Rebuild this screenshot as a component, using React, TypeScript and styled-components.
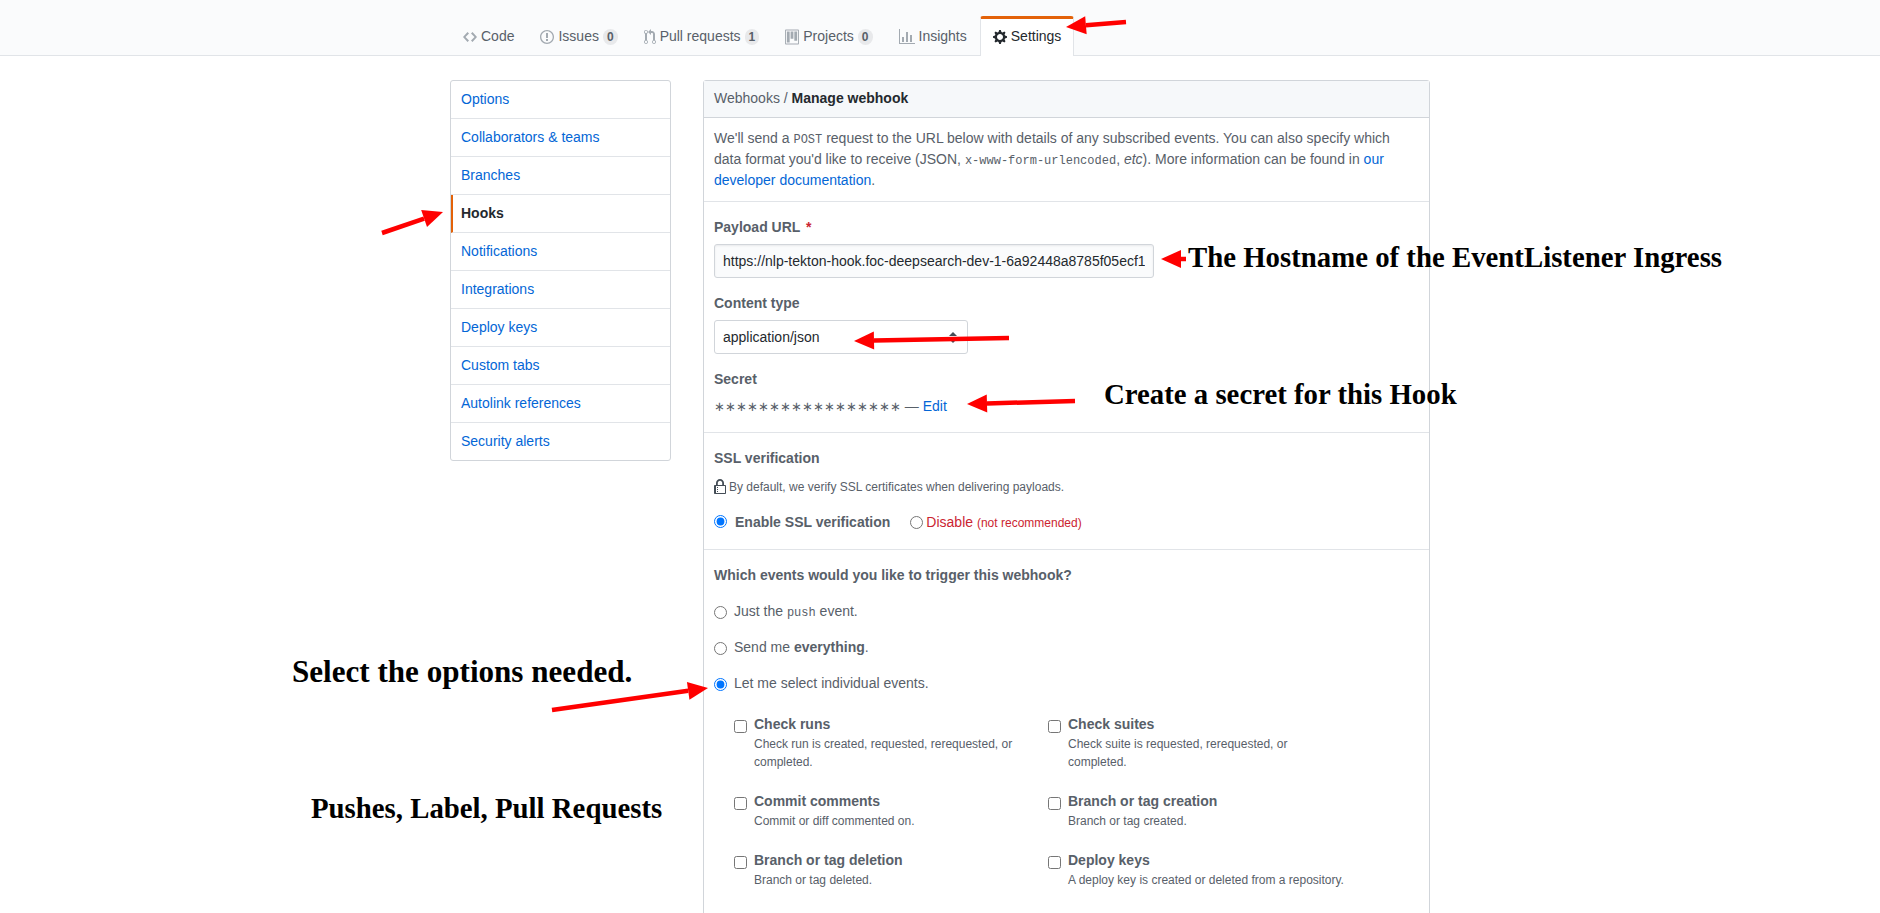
import styled, { createGlobalStyle } from "styled-components";

const GlobalStyle = createGlobalStyle`
    html, body {
        margin: 0;
        height: 913px;
        overflow: hidden;
        background: #fff;
    }
    body {
        font-family: "Liberation Sans", Arial, sans-serif;
        font-size: 14px;
        line-height: 1.5;
        color: #24292e;
    }
`

const Page = styled.div`
    position: relative;
    width: 1880px;
    height: 913px;
    overflow: hidden;
`

const RepoHead = styled.header`
    height: 55px;
    background: #fafbfc;
    border-bottom: 1px solid #e1e4e8;
`

const Nav = styled.nav`
    display: flex;
    width: 980px;
    height: 56px;
    margin: 0 auto;
    padding-top: 16px;
    box-sizing: border-box;
`

const Tab = styled.a<{ $selected?: boolean }>`
    display: flex;
    align-items: center;
    gap: 4px;
    box-sizing: border-box;
    height: 40px;
    padding: 0 12px 2px;
    color: ${(p) => (p.$selected ? "#24292e" : "#586069")};
    background: ${(p) => (p.$selected ? "#fff" : "transparent")};
    border: 1px solid ${(p) => (p.$selected ? "#e1e4e8" : "transparent")};
    border-bottom: 0;
    border-top: 3px solid ${(p) => (p.$selected ? "#e36209" : "transparent")};
    border-radius: 3px 3px 0 0;
    svg {
        fill: ${(p) => (p.$selected ? "#24292e" : "#a3aab1")};
    }
`

const Counter = styled.span`
    padding: 2px 4px;
    font-size: 12px;
    font-weight: 600;
    line-height: 1;
    color: #586069;
    background: rgba(27, 31, 35, 0.08);
    border-radius: 20px;
`

const Container = styled.main`
    display: grid;
    grid-template-columns: 221px 727px;
    gap: 32px;
    width: 980px;
    margin: 24px auto 0;
`

const Menu = styled.ul`
    align-self: start;
    margin: 0;
    padding: 0;
    list-style: none;
    background: #fff;
    border: 1px solid #d1d5da;
    border-radius: 3px;
`

const MenuItem = styled.li<{ $selected?: boolean }>`
    box-sizing: border-box;
    height: 38px;
    padding: 8px 10px 0 ${(p) => (p.$selected ? "8px" : "10px")};
    color: ${(p) => (p.$selected ? "#24292e" : "#0366d6")};
    font-weight: ${(p) => (p.$selected ? 600 : 400)};
    border-left: ${(p) => (p.$selected ? "2px solid #e36209" : "0")};
    border-bottom: 1px solid #e1e4e8;
    &:last-child {
        height: 37px;
        border-bottom: 0;
    }
`

const Panel = styled.section`
    min-height: 900px;
    background: #fff;
    border: 1px solid #d1d5da;
    border-radius: 3px;
    color: #586069;
`

const PanelHead = styled.div`
    box-sizing: border-box;
    height: 37px;
    padding: 7px 10px;
    background: #f6f8fa;
    border-bottom: 1px solid #d1d5da;
    strong {
        color: #24292e;
        font-weight: 600;
    }
`

const Section = styled.div<{ $bottom?: number; $line?: boolean }>`
    padding: 15px 10px ${(p) => p.$bottom ?? 15}px;
    border-bottom: ${(p) => (p.$line ? "1px solid #e1e4e8" : "0")};
`

const Intro = styled.p`
    margin: 0;
    padding: 10px 10px;
    border-bottom: 1px solid #e1e4e8;
    code {
        font-family: "Liberation Mono", monospace;
        font-size: 12px;
    }
    a {
        color: #0366d6;
    }
`

const Field = styled.div`
    & + & {
        margin-top: 15px;
    }
`

const FieldLabel = styled.div`
    font-weight: 600;
    margin-bottom: 6px;
    em {
        color: #cb2431;
        font-style: normal;
        margin-left: 2px;
    }
`

const TextInput = styled.input`
    display: block;
    box-sizing: border-box;
    width: 440px;
    height: 34px;
    padding: 6px 8px;
    font: 14px "Liberation Sans", Arial, sans-serif;
    color: #24292e;
    background: #fafbfc;
    border: 1px solid #d1d5da;
    border-radius: 3px;
    box-shadow: inset 0 1px 2px rgba(27, 31, 35, 0.075);
    outline: none;
`

const SelectWrap = styled.div`
    position: relative;
    width: 254px;
    &::before,
    &::after {
        content: "";
        position: absolute;
        right: 11px;
        border-left: 4px solid transparent;
        border-right: 4px solid transparent;
    }
    &::before {
        top: 12px;
        border-bottom: 4px solid #444d56;
    }
    &::after {
        top: 19px;
        border-top: 4px solid #444d56;
    }
`

const Select = styled.select`
    display: block;
    appearance: none;
    box-sizing: border-box;
    width: 100%;
    height: 34px;
    padding: 0 8px;
    font: 14px "Liberation Sans", Arial, sans-serif;
    color: #24292e;
    background: #fff;
    border: 1px solid #d1d5da;
    border-radius: 3px;
`

const SecretRow = styled.div`
    a {
        color: #0366d6;
    }
`

const Stars = styled.span`
    font-family: "DejaVu Sans", sans-serif;
    font-size: 13px;
    letter-spacing: 0.1px;
    color: #586069;
`

const HelpText = styled.div`
    display: flex;
    align-items: center;
    gap: 3px;
    height: 18px;
    font-size: 12px;
    line-height: 18px;
    margin: 9px 0 16px;
    svg {
        fill: #444d56;
        flex: none;
    }
`

const RadioLine = styled.div`
    display: flex;
    align-items: center;
    height: 21px;
`

const Radio = styled.input`
    flex: none;
    width: 13px;
    height: 13px;
    margin: 0 7px 0 0;
`

const EnableRadio = styled(Radio)`
    margin: -2px 8px 0 0;
`

const EventRadio = styled(Radio)`
    margin-top: 2px;
`

const RadioLabel = styled.span<{ $strong?: boolean }>`
    font-weight: ${(p) => (p.$strong ? 600 : 400)};
`

const Danger = styled.span`
    color: #cb2431;
    small {
        font-size: 12px;
    }
`

const SslOff = styled.span`
    display: flex;
    align-items: center;
    margin-left: 20px;
    input {
        margin-right: 3px;
    }
`

const EventChoices = styled.div`
    display: grid;
    gap: 15px;
    margin-top: 15px;
    code {
        font-family: "Liberation Mono", monospace;
        font-size: 12px;
    }
    strong {
        font-weight: 600;
    }
`

const EventGrid = styled.div`
    display: grid;
    grid-template-columns: 314px 314px;
    row-gap: 20px;
    margin: 20px 0 0 20px;
`

const EventItem = styled.div`
    display: grid;
    grid-template-columns: 20px 278px;
`

const Check = styled.input`
    width: 13px;
    height: 13px;
    margin: 6px 0 0;
`

const EventName = styled.div`
    font-weight: 600;
`

const EventNote = styled.div`
    grid-column: 2;
    font-size: 12px;
    line-height: 18px;
`

const Note = styled.div<{ $x: number; $y: number; $size?: number }>`
    position: absolute;
    left: ${(p) => p.$x}px;
    top: ${(p) => p.$y}px;
    font-family: "Liberation Serif", "Times New Roman", serif;
    font-size: ${(p) => p.$size ?? 28.8}px;
    font-weight: 700;
    line-height: 40px;
    color: #000;
    white-space: nowrap;
`

const ArrowLayer = styled.svg`
    position: absolute;
    left: 0;
    top: 0;
    pointer-events: none;
`

const Icon = ({ w, shown, d }: { w: number; shown?: number; d: string }) => (
    <svg width={shown ?? w} height={16} viewBox={`0 0 ${w} 16`}>
        <path fillRule="evenodd" d={d} />
    </svg>
)

const icons = {
    code: "M9.5 3L8 4.5 11.5 8 8 11.5 9.5 13 14 8 9.5 3zm-5 0L0 8l4.5 5L6 11.5 2.5 8 6 4.5 4.5 3z",
    issue: "M7 2.3c3.14 0 5.7 2.56 5.7 5.7s-2.56 5.7-5.7 5.7A5.71 5.71 0 0 1 1.3 8c0-3.14 2.56-5.7 5.7-5.7zM7 1C3.14 1 0 4.14 0 8s3.14 7 7 7 7-3.14 7-7-3.14-7-7-7zm1 3H6v5h2V4zm0 6H6v2h2v-2z",
    pull: "M11 11.28V5c-.03-.78-.34-1.47-.94-2.06C9.46 2.35 8.78 2.03 8 2H7V0L4 3l3 3V4h1c.27.02.48.11.69.31.21.2.3.42.31.69v6.28A1.993 1.993 0 0 0 10 15a1.993 1.993 0 0 0 1-3.72zm-1 2.92c-.66 0-1.2-.55-1.2-1.2 0-.65.55-1.2 1.2-1.2.65 0 1.2.55 1.2 1.2 0 .65-.55 1.2-1.2 1.2zM4 3c0-1.11-.89-2-2-2a1.993 1.993 0 0 0-1 3.72v6.56A1.993 1.993 0 0 0 2 15a1.993 1.993 0 0 0 1-3.72V4.72c.59-.34 1-.98 1-1.72zm-.8 10c0 .66-.55 1.2-1.2 1.2-.65 0-1.2-.55-1.2-1.2 0-.65.55-1.2 1.2-1.2.65 0 1.2.55 1.2 1.2zM2 4.2C1.34 4.2.8 3.65.8 3c0-.65.55-1.2 1.2-1.2.65 0 1.2.55 1.2 1.2 0 .65-.55 1.2-1.2 1.2z",
    project: "M10 12h3V2h-3v10zm-4-2h3V2H6v8zm-4 4h3V2H2v12zm-1 1h13V1H1v14zM14 0H1a1 1 0 0 0-1 1v14a1 1 0 0 0 1 1h13a1 1 0 0 0 1-1V1a1 1 0 0 0-1-1z",
    graph: "M16 14v1H0V0h1v14h15zM5 13H3V8h2v5zm4 0H7V3h2v10zm4 0h-2V6h2v7z",
    gear: "M14 8.77v-1.6l-1.94-.64-.45-1.09.88-1.84-1.13-1.13-1.81.91-1.09-.45-.69-1.92h-1.6l-.63 1.94-1.11.45-1.84-.88-1.13 1.13.91 1.81-.45 1.09L0 7.23v1.59l1.94.64.45 1.09-.88 1.84 1.13 1.13 1.81-.91 1.09.45.69 1.92h1.59l.63-1.94 1.11-.45 1.84.88 1.13-1.13-.92-1.81.47-1.09L14 8.75v.02zM7 11c-1.66 0-3-1.34-3-3s1.34-3 3-3 3 1.34 3 3-1.34 3-3 3z",
    lock: "M4 13H3v-1h1v1zm8-6v7c0 .55-.45 1-1 1H1c-.55 0-1-.45-1-1V7c0-.55.45-1 1-1h1V4c0-2.2 1.8-4 4-4s4 1.8 4 4v2h1c.55 0 1 .45 1 1zM3.8 6h4.41V4c0-1.22-.98-2.2-2.2-2.2-1.22 0-2.2.98-2.2 2.2v2H3.8zM11 7H2v7h9V7zM4 8H3v1h1V8zm0 2H3v1h1v-1z",
}

const menu = [
    "Options",
    "Collaborators & teams",
    "Branches",
    "Hooks",
    "Notifications",
    "Integrations",
    "Deploy keys",
    "Custom tabs",
    "Autolink references",
    "Security alerts",
]

const events = [
    { name: "Check runs", note: "Check run is created, requested, rerequested, or completed." },
    { name: "Check suites", note: "Check suite is requested, rerequested, or completed." },
    { name: "Commit comments", note: "Commit or diff commented on." },
    { name: "Branch or tag creation", note: "Branch or tag created." },
    { name: "Branch or tag deletion", note: "Branch or tag deleted." },
    { name: "Deploy keys", note: "A deploy key is created or deleted from a repository." },
]

// tail x, tail y, tip x, tip y
const arrows = [
    [1126, 22, 1066, 27],
    [382, 233, 443, 212],
    [1186, 259, 1161, 259],
    [1009, 338, 854, 341],
    [1075, 401, 967, 404],
    [552, 710, 708, 688],
]

const Arrow = ({ a }: { a: number[] }) => {
    const [x1, y1, x2, y2] = a
    const len = Math.hypot(x2 - x1, y2 - y1)
    const ux = (x2 - x1) / len
    const uy = (y2 - y1) / len
    const head = 20
    const half = 9
    const bx = x2 - ux * head
    const by = y2 - uy * head
    const points = `${x2},${y2} ${bx - uy * half},${by + ux * half} ${bx + uy * half},${by - ux * half}`
    return (
        <g fill="#ff0000" stroke="#ff0000">
            <line x1={x1} y1={y1} x2={bx} y2={by} strokeWidth={4.5} />
            <polygon points={points} strokeWidth={0} />
        </g>
    )
}

export default function App() {
    return (
        <Page>
            <GlobalStyle />
            <RepoHead>
                <Nav>
                    <Tab><Icon w={14} d={icons.code} />Code</Tab>
                    <Tab><Icon w={14} d={icons.issue} />Issues <Counter>0</Counter></Tab>
                    <Tab><Icon w={12} d={icons.pull} />Pull requests <Counter>1</Counter></Tab>
                    <Tab><Icon w={15} shown={14} d={icons.project} />Projects <Counter>0</Counter></Tab>
                    <Tab><Icon w={16} d={icons.graph} />Insights</Tab>
                    <Tab $selected><Icon w={14} d={icons.gear} />Settings</Tab>
                </Nav>
            </RepoHead>
            <Container>
                <Menu>
                    {menu.map((item) => (
                        <MenuItem key={item} $selected={item === "Hooks"}>{item}</MenuItem>
                    ))}
                </Menu>
                <Panel>
                    <PanelHead>Webhooks / <strong>Manage webhook</strong></PanelHead>
                    <Intro>
                        We'll send a <code>POST</code> request to the URL below with details of any subscribed events. You can also specify which data format you'd like to receive (JSON, <code>x-www-form-urlencoded</code>, <em>etc</em>). More information can be found in <a>our developer documentation</a>.
                    </Intro>
                    <Section $line>
                        <Field>
                            <FieldLabel>Payload URL <em>*</em></FieldLabel>
                            <TextInput readOnly value="https://nlp-tekton-hook.foc-deepsearch-dev-1-6a92448a8785f05ecf1.us-south.containers" />
                        </Field>
                        <Field>
                            <FieldLabel>Content type</FieldLabel>
                            <SelectWrap>
                                <Select defaultValue="json">
                                    <option value="json">application/json</option>
                                </Select>
                            </SelectWrap>
                        </Field>
                        <Field>
                            <FieldLabel>Secret</FieldLabel>
                            <SecretRow><Stars>∗∗∗∗∗∗∗∗∗∗∗∗∗∗∗∗∗</Stars> — <a>Edit</a></SecretRow>
                        </Field>
                    </Section>
                    <Section $line $bottom={16}>
                        <FieldLabel>SSL verification</FieldLabel>
                        <HelpText>
                            <Icon w={12} d={icons.lock} />
                            By default, we verify SSL certificates when delivering payloads.
                        </HelpText>
                        <RadioLine>
                            <EnableRadio type="radio" name="ssl" defaultChecked />
                            <RadioLabel $strong>Enable SSL verification</RadioLabel>
                            <SslOff>
                                <Radio type="radio" name="ssl" />
                                <Danger>Disable <small>(not recommended)</small></Danger>
                            </SslOff>
                        </RadioLine>
                    </Section>
                    <Section>
                        <FieldLabel>Which events would you like to trigger this webhook?</FieldLabel>
                        <EventChoices>
                            <RadioLine>
                                <EventRadio type="radio" name="scope" />
                                <span>Just the <code>push</code> event.</span>
                            </RadioLine>
                            <RadioLine>
                                <EventRadio type="radio" name="scope" />
                                <span>Send me <strong>everything</strong>.</span>
                            </RadioLine>
                            <RadioLine>
                                <EventRadio type="radio" name="scope" defaultChecked />
                                <span>Let me select individual events.</span>
                            </RadioLine>
                        </EventChoices>
                        <EventGrid>
                            {events.map((ev) => (
                                <EventItem key={ev.name}>
                                    <Check type="checkbox" />
                                    <EventName>{ev.name}</EventName>
                                    <EventNote>{ev.note}</EventNote>
                                </EventItem>
                            ))}
                        </EventGrid>
                    </Section>
                </Panel>
            </Container>
            <ArrowLayer width={1880} height={913}>
                {arrows.map((a) => (
                    <Arrow key={a.join()} a={a} />
                ))}
            </ArrowLayer>
            <Note $x={1188} $y={237}>The Hostname of the EventListener Ingress</Note>
            <Note $x={1104} $y={374}>Create a secret for this Hook</Note>
            <Note $x={292} $y={652} $size={31.1}>Select the options needed.</Note>
            <Note $x={311} $y={788}>Pushes, Label, Pull Requests</Note>
        </Page>
    )
}
